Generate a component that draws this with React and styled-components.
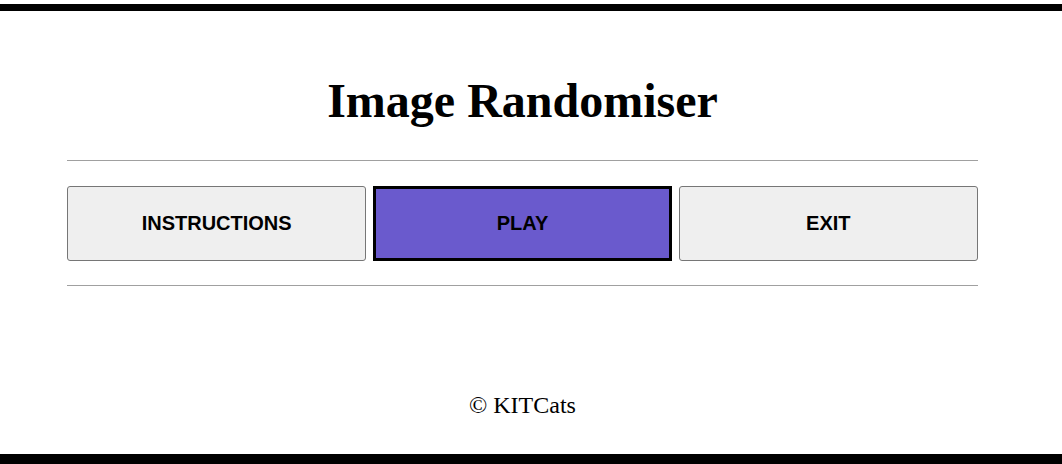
import React from 'react';
import styled, { createGlobalStyle } from 'styled-components';

const GlobalStyle = createGlobalStyle`
  html, body {
    margin: 0;
    padding: 0;
    background: #fff;
  }
  body {
    font-family: "Liberation Serif", "Times New Roman", serif;
    color: #000;
  }
`;

const Page = styled.div`
  margin-top: 4px;
  height: 460px;
  box-sizing: border-box;
  border-top: 7px solid #000;
  border-bottom: 10px solid #000;
  display: flex;
  flex-direction: column;
`;

const Main = styled.main`
  width: 911px;
  margin-left: 67px;
  display: flex;
  flex-direction: column;
`;

const Title = styled.h1`
  margin: 62px 0 0;
  font-size: 48px;
  font-weight: bold;
  text-align: center;
  line-height: 55px;
`;

const Rule = styled.hr`
  margin: ${props => props.top}px 0 0;
  border: none;
  border-top: 1px solid #a0a0a0;
  height: 0;
`;

const ButtonRow = styled.div`
  display: grid;
  grid-template-columns: repeat(3, 1fr);
  column-gap: 6.5px;
  margin-top: 25px;
`;

const MenuButton = styled.button`
  height: 75px;
  box-sizing: border-box;
  font-family: "Liberation Sans", Arial, sans-serif;
  font-size: 20px;
  font-weight: bold;
  color: #000;
  background: ${props => (props.$active ? '#6a5acd' : '#efefef')};
  border: ${props => (props.$active ? '3px solid #000' : '1px solid #767676')};
  border-radius: ${props => (props.$active ? '0' : '3px')};
  cursor: pointer;
`;

const Footer = styled.footer`
  margin-top: 105px;
  text-align: center;
  font-size: 24px;
  line-height: 28px;
`;

export default function App() {
  return (
    <>
      <GlobalStyle />
      <Page>
        <Main>
          <Title>Image Randomiser</Title>
          <Rule top={32} />
          <ButtonRow>
            <MenuButton>INSTRUCTIONS</MenuButton>
            <MenuButton $active>PLAY</MenuButton>
            <MenuButton>EXIT</MenuButton>
          </ButtonRow>
          <Rule top={24} />
          <Footer>© KITCats</Footer>
        </Main>
      </Page>
    </>
  );
}
